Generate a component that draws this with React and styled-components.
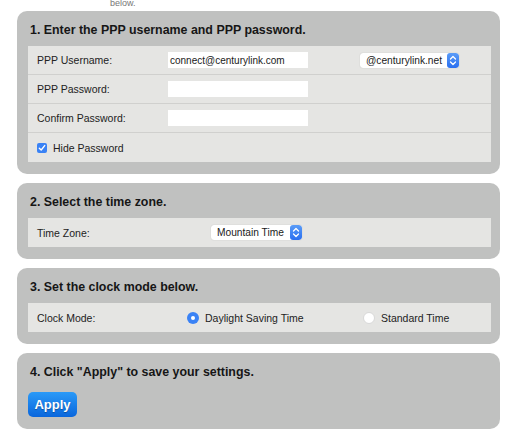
import React from 'react'
import styled, { createGlobalStyle } from 'styled-components'

const GlobalStyle = createGlobalStyle`
    body {
        margin: 0;
        background: #ffffff;
        font-family: "Liberation Sans", Arial, sans-serif;
        color: #1c1c1c;
    }
`;

function Stepper() {
    return <StepperBox>
        <svg width="8" height="11" viewBox="0 0 8 11">
            <path d="M1.5 4 L4 1.5 L6.5 4 M1.5 7 L4 9.5 L6.5 7" fill="none" stroke="#fff" strokeWidth="1.3" strokeLinecap="round" strokeLinejoin="round" />
        </svg>
    </StepperBox>
}

function Select({ value, width }) {
    return <SelectBox $width={width}>
        <SelectText>{value}</SelectText>
        <Stepper />
    </SelectBox>
}

function Radio({ checked, label }) {
    return <RadioLabel>
        <RadioDot $checked={checked} />
        {label}
    </RadioLabel>
}

function App() {
    return <Page>
        <GlobalStyle />
        <Caption><span>below.</span></Caption>

        <Panel>
            <Title>1. Enter the PPP username and PPP password.</Title>
            <Row $cols="131px 192px auto">
                <Label>PPP Username:</Label>
                <Field>connect@centurylink.com</Field>
                <Select value="@centurylink.net" width={99} />
            </Row>
            <Row $cols="131px 140px">
                <Label>PPP Password:</Label>
                <Field />
            </Row>
            <Row $cols="131px 140px">
                <Label>Confirm Password:</Label>
                <Field />
            </Row>
            <Row $cols="auto" $last>
                <CheckLabel>
                    <Check>
                        <svg width="8" height="8" viewBox="0 0 8 8">
                            <path d="M1.3 4.2 L3.2 6 L6.7 1.6" fill="none" stroke="#fff" strokeWidth="1.4" strokeLinecap="round" strokeLinejoin="round" />
                        </svg>
                    </Check>
                    Hide Password
                </CheckLabel>
            </Row>
        </Panel>

        <Panel>
            <Title>2. Select the time zone.</Title>
            <Row $cols="174px auto" $last>
                <Label>Time Zone:</Label>
                <Select value="Mountain Time" width={91} />
            </Row>
        </Panel>

        <Panel>
            <Title>3. Set the clock mode below.</Title>
            <Row $cols="150px 176px auto" $last>
                <Label>Clock Mode:</Label>
                <Radio checked label="Daylight Saving Time" />
                <Radio label="Standard Time" />
            </Row>
        </Panel>

        <Panel>
            <Title>4. Click "Apply" to save your settings.</Title>
            <ApplyButton>Apply</ApplyButton>
        </Panel>
    </Page>
}

const Page = styled.div`
    display: flex;
    flex-direction: column;
    gap: 9px;
    padding: 0 6px 10px 17px;
`;

const Caption = styled.div`
    height: 6px;
    margin-bottom: -4px;
    overflow: hidden;
    display: flex;
    align-items: flex-end;
    padding-left: 93px;
    span {
        font-size: 9px;
        line-height: 9px;
        color: #777;
        margin-bottom: -2px;
    }
`;

const Panel = styled.section`
    background: #c0c1c0;
    border-radius: 10px;
    padding: 0 9px 12px 11px;
`;

const Title = styled.h2`
    margin: 0;
    height: 35px;
    padding: 2px 0 0 2px;
    box-sizing: border-box;
    display: flex;
    align-items: center;
    font-size: 12.4px;
    font-weight: bold;
    color: #161616;
`;

const Row = styled.div`
    display: grid;
    grid-template-columns: ${ p => p.$cols };
    align-items: center;
    box-sizing: border-box;
    height: 29px;
    padding-left: 9px;
    background: #e5e5e3;
    border-bottom: ${ p => p.$last ? 'none' : '1px solid #d0d0ce' };
    font-size: 10.5px;
`;

const Label = styled.span`
    color: #222;
`;

const Field = styled.div`
    width: 140px;
    height: 16px;
    background: #ffffff;
    box-sizing: border-box;
    padding: 2px 2px 0;
    font-size: 10px;
    color: #1a1a1a;
    line-height: 13px;
`;

const SelectBox = styled.div`
    display: flex;
    align-items: stretch;
    width: ${ p => p.$width }px;
    height: 15px;
    background: #ffffff;
    border-radius: 3px;
    box-shadow: 0 0 1px rgba(0, 0, 0, .25);
    overflow: hidden;
`;

const SelectText = styled.span`
    flex: 1;
    padding-left: 6px;
    font-size: 10.2px;
    line-height: 15px;
    color: #1a1a1a;
`;

const StepperBox = styled.span`
    width: 12px;
    display: flex;
    align-items: center;
    justify-content: center;
    background: linear-gradient(#5a9cf7, #2a6ff0);
    border-radius: 3px;
`;

const CheckLabel = styled.label`
    display: flex;
    align-items: center;
    gap: 6px;
    font-size: 10.5px;
    color: #222;
`;

const Check = styled.span`
    width: 10px;
    height: 10px;
    border-radius: 2px;
    background: #3a82f5;
    display: flex;
    align-items: center;
    justify-content: center;
`;

const RadioLabel = styled.label`
    display: flex;
    align-items: center;
    gap: 6px;
    font-size: 10.5px;
    color: #222;
`;

const RadioDot = styled.span`
    box-sizing: border-box;
    width: 12px;
    height: 12px;
    border-radius: 50%;
    background: ${ p => p.$checked ? '#3a82f5' : '#ffffff' };
    border: ${ p => p.$checked ? 'none' : '1px solid #d8d8d8' };
    display: flex;
    align-items: center;
    justify-content: center;
    &::after {
        content: "";
        width: 4px;
        height: 4px;
        border-radius: 50%;
        background: ${ p => p.$checked ? '#ffffff' : 'transparent' };
    }
`;

const ApplyButton = styled.button`
    margin: 4px 0 0;
    width: 49px;
    height: 25px;
    border: none;
    border-radius: 5px;
    background: linear-gradient(#2a9af8, #0a66dc);
    color: #ffffff;
    font-family: "Liberation Sans", Arial, sans-serif;
    font-size: 13px;
    font-weight: bold;
    text-shadow: 0 1px 1px rgba(0, 0, 0, .3);
    padding: 0;
`;

export default App
